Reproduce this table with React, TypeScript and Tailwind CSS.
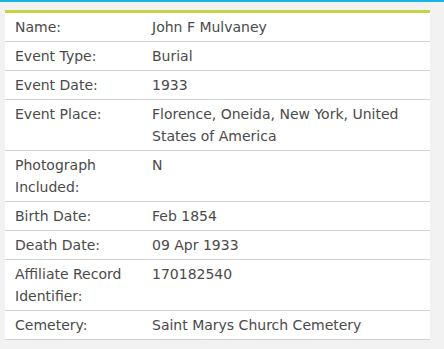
const rows: { label: string; value: string }[] = [
  { label: "Name:", value: "John F Mulvaney" },
  { label: "Event Type:", value: "Burial" },
  { label: "Event Date:", value: "1933" },
  { label: "Event Place:", value: "Florence, Oneida, New York, United States of America" },
  { label: "Photograph Included:", value: "N" },
  { label: "Birth Date:", value: "Feb 1854" },
  { label: "Death Date:", value: "09 Apr 1933" },
  { label: "Affiliate Record Identifier:", value: "170182540" },
  { label: "Cemetery:", value: "Saint Marys Church Cemetery" },
];

export default function App() {
  return (
    <div
      className="w-[444px] h-[349px] bg-[#f2f2f2] border-t-2 border-[#17b6e6] overflow-hidden"
      style={{ fontFamily: '"DejaVu Sans", Verdana, sans-serif' }}
    >
      <div className="ml-[5px] mt-[8px] w-[425px] bg-white border-t-[3px] border-[#bfd640]">
        {rows.map((r) => (
          <div
            key={r.label}
            className="flex border-b border-[#d2d2d2] py-[3px] text-[14px] leading-[22px] text-[#4a4a4a]"
          >
            <div className="w-[147px] shrink-0 pl-[10px] pr-3">{r.label}</div>
            <div className="flex-1 pr-2">{r.value}</div>
          </div>
        ))}
      </div>
    </div>
  );
}
